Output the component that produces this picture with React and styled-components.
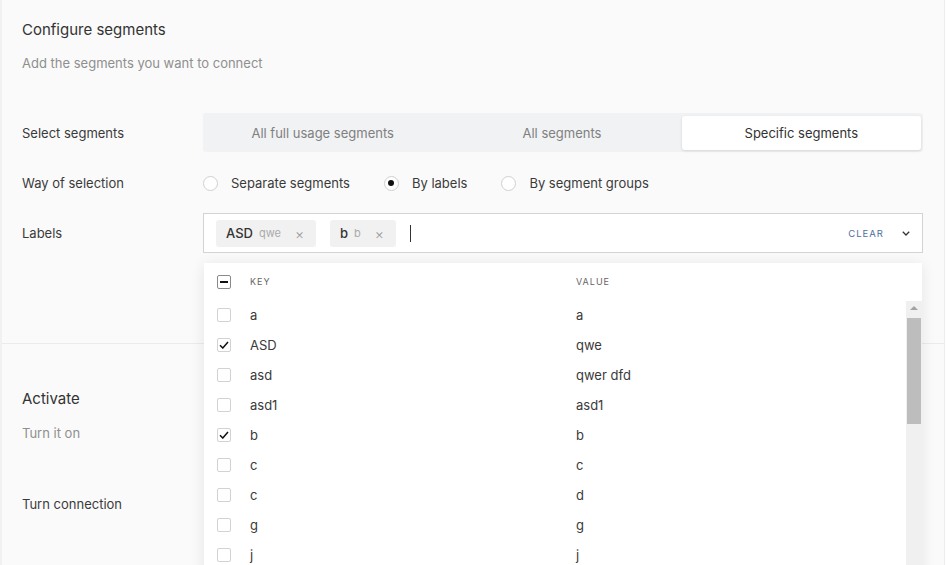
import React from "react";
import styled, { createGlobalStyle } from "styled-components";

const Global = createGlobalStyle`
  html, body { margin: 0; padding: 0; background: #ffffff; }
  body { font-family: Inter, "Noto Sans", "Liberation Sans", sans-serif; color: #333; }
  * { box-sizing: border-box; }
`;

const Panel = styled.div`
  width: 945px;
  height: 565px;
  overflow: hidden;
  background: #fafafa;
  border-left: 2px solid #f1f1f1;
  border-right: 1px solid #ececec;
`;

const Section = styled.section`
  padding: ${(p) => p.$pad};
  border-bottom: ${(p) => (p.$divider ? "1px solid #ebebeb" : "none")};
`;

const Title = styled.h2`
  margin: 0;
  font-size: 15px;
  line-height: 20px;
  font-weight: 400;
  color: #333;
`;

const Subtitle = styled.p`
  margin: ${(p) => p.$mt}px 0 0;
  font-size: 13px;
  line-height: 18px;
  color: #8f8f8f;
`;

const FormRow = styled.div`
  display: grid;
  grid-template-columns: 181px 1fr;
  align-items: center;
  margin-top: ${(p) => p.$mt}px;
  min-height: ${(p) => p.$h || 20}px;
`;

const Label = styled.div`
  font-size: 13px;
  line-height: 18px;
  color: #3a3a3a;
`;

const Segmented = styled.div`
  display: grid;
  grid-template-columns: repeat(3, 1fr);
  height: 39px;
  padding: 3px 2px 2px 0;
  background: #f1f2f4;
  border-radius: 3px;
`;

const Tab = styled.div`
  display: flex;
  align-items: center;
  justify-content: center;
  font-size: 13px;
  color: ${(p) => (p.$active ? "#333" : "#808080")};
  background: ${(p) => (p.$active ? "#fff" : "transparent")};
  border-radius: 3px;
  box-shadow: ${(p) => (p.$active ? "0 1px 3px rgba(0,0,0,0.12)" : "none")};
`;

const RadioGroup = styled.div`
  display: flex;
  align-items: center;
  gap: 34px;
`;

const RadioItem = styled.label`
  display: flex;
  align-items: center;
  gap: 13px;
  font-size: 13px;
  color: #3a3a3a;
`;

const RadioCircle = styled.span`
  width: 15px;
  height: 15px;
  border-radius: 50%;
  border: 1px solid #d0d0d0;
  background: #fff;
  display: flex;
  align-items: center;
  justify-content: center;
  &::after {
    content: "";
    width: 6px;
    height: 6px;
    border-radius: 50%;
    background: ${(p) => (p.$checked ? "#111" : "transparent")};
  }
`;

const SelectWrap = styled.div`
  position: relative;
`;

const SelectBox = styled.div`
  height: 40px;
  display: flex;
  align-items: center;
  gap: 14px;
  padding: 0 12px;
  background: #fff;
  border: 1px solid #d3d3d3;
`;

const Chip = styled.span`
  display: inline-flex;
  align-items: center;
  height: 27px;
  padding: 0 12px 0 10px;
  background: #f1f1f1;
  border-radius: 3px;
  gap: 6px;
`;

const ChipKey = styled.span`
  font-size: 13px;
  font-weight: 500;
  color: #333;
`;

const ChipVal = styled.span`
  font-size: 11px;
  color: #ababab;
`;

const ChipX = styled.span`
  font-size: 14px;
  font-weight: 300;
  color: #9a9a9a;
  margin-left: 8px;
`;

const Caret = styled.span`
  width: 1px;
  height: 17px;
  background: #333;
`;

const Spacer = styled.div`
  flex: 1;
`;

const Clear = styled.span`
  font-size: 9.5px;
  letter-spacing: 1px;
  color: #4f6f9c;
  margin-right: 4px;
`;

const Dropdown = styled.div`
  position: absolute;
  top: calc(100% + 10px);
  left: 1px;
  right: 1px;
  height: 320px;
  background: #fff;
  box-shadow: 0 2px 14px rgba(0, 0, 0, 0.09);
  display: flex;
  flex-direction: column;
`;

const Grid = styled.div`
  display: grid;
  grid-template-columns: 33px 326px 1fr;
  align-items: center;
  height: ${(p) => p.$h}px;
  padding-left: 13px;
`;

const HeadCell = styled.span`
  font-size: 9px;
  letter-spacing: 1px;
  color: #666;
`;

const Body = styled.div`
  display: flex;
  flex: 1;
  min-height: 0;
`;

const Rows = styled.div`
  flex: 1;
`;

const Cell = styled.span`
  font-size: 13px;
  color: #3a3a3a;
`;

const Box = styled.span`
  width: 14px;
  height: 14px;
  border: 1px solid ${(p) => (p.$strong ? "#8a8a8a" : "#d2d2d2")};
  border-radius: 2px;
  background: #fff;
  display: flex;
  align-items: center;
  justify-content: center;
`;

const Scrollbar = styled.div`
  width: 16px;
  margin-top: 1px;
  background: #f0f0f0;
  display: flex;
  flex-direction: column;
  align-items: center;
  padding-top: 5px;
`;

const Arrow = styled.span`
  width: 0;
  height: 0;
  border-left: 4px solid transparent;
  border-right: 4px solid transparent;
  border-bottom: 4px solid #a3a3a3;
`;

const Thumb = styled.div`
  width: 14px;
  height: 106px;
  margin-top: 8px;
  background: #bdbdbd;
`;

const Check = () => (
  <svg width="10" height="8" viewBox="0 0 10 8">
    <path d="M1 4.2 L3.8 7 L9 1" fill="none" stroke="#111" strokeWidth="1.5" />
  </svg>
);

const Chevron = () => (
  <svg width="8" height="5" viewBox="0 0 8 5">
    <path d="M0.8 0.8 L4 4 L7.2 0.8" fill="none" stroke="#333" strokeWidth="1.3" />
  </svg>
);

const rows = [
  ["a", "a", false],
  ["ASD", "qwe", true],
  ["asd", "qwer dfd", false],
  ["asd1", "asd1", false],
  ["b", "b", true],
  ["c", "c", false],
  ["c", "d", false],
  ["g", "g", false],
  ["j", "j", false],
];

export default function App() {
  return (
    <>
      <Global />
      <Panel>
        <Section $divider $pad="20px 21px 90px 20px">
          <Title>Configure segments</Title>
          <Subtitle $mt={14}>Add the segments you want to connect</Subtitle>
          <FormRow $mt={41} $h={39}>
            <Label>Select segments</Label>
            <Segmented>
              <Tab>All full usage segments</Tab>
              <Tab>All segments</Tab>
              <Tab $active>Specific segments</Tab>
            </Segmented>
          </FormRow>
          <FormRow $mt={21}>
            <Label>Way of selection</Label>
            <RadioGroup>
              <RadioItem>
                <RadioCircle />
                Separate segments
              </RadioItem>
              <RadioItem>
                <RadioCircle $checked />
                By labels
              </RadioItem>
              <RadioItem>
                <RadioCircle />
                By segment groups
              </RadioItem>
            </RadioGroup>
          </FormRow>
          <FormRow $mt={20} $h={40}>
            <Label>Labels</Label>
            <SelectWrap>
              <SelectBox>
                <Chip>
                  <ChipKey>ASD</ChipKey>
                  <ChipVal>qwe</ChipVal>
                  <ChipX>×</ChipX>
                </Chip>
                <Chip>
                  <ChipKey>b</ChipKey>
                  <ChipVal>b</ChipVal>
                  <ChipX>×</ChipX>
                </Chip>
                <Caret />
                <Spacer />
                <Clear>CLEAR</Clear>
                <Chevron />
              </SelectBox>
              <Dropdown>
                <Grid $h={37}>
                  <Box $strong>
                    <svg width="8" height="2" viewBox="0 0 8 2">
                      <rect width="8" height="2" fill="#111" />
                    </svg>
                  </Box>
                  <HeadCell>KEY</HeadCell>
                  <HeadCell>VALUE</HeadCell>
                </Grid>
                <Body>
                  <Rows>
                    {rows.map(([k, v, c], i) => (
                      <Grid key={i} $h={30}>
                        <Box>{c && <Check />}</Box>
                        <Cell>{k}</Cell>
                        <Cell>{v}</Cell>
                      </Grid>
                    ))}
                  </Rows>
                  <Scrollbar>
                    <Arrow />
                    <Thumb />
                  </Scrollbar>
                </Body>
              </Dropdown>
            </SelectWrap>
          </FormRow>
        </Section>
        <Section $pad="45px 21px 0 20px">
          <Title>Activate</Title>
          <Subtitle $mt={15}>Turn it on</Subtitle>
          <FormRow $mt={52}>
            <Label>Turn connection</Label>
          </FormRow>
        </Section>
      </Panel>
    </>
  );
}
